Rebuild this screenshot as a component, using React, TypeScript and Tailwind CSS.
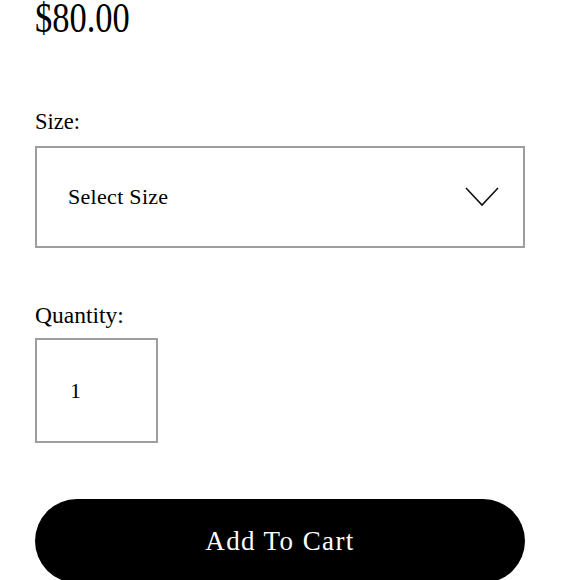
export default function App() {
  return (
    <div className="min-h-[580px] w-[580px] overflow-hidden bg-white text-black font-['Liberation_Serif',serif]">
      <div className="w-[490px] ml-[35px]">
        {/* Price */}
        <div className="mt-[-3px] h-[42px] text-[42px] leading-[42px]">
          <span className="inline-block origin-left scale-x-[0.82]">$80.00</span>
        </div>

        {/* Size */}
        <label className="block mt-[70px] text-[22.5px] leading-[26px]">Size:</label>
        <div className="mt-[11px] h-[102px] border-2 border-[#9e9e9e] flex items-center justify-between pl-[31px] pr-[24px]">
          <span className="text-[22px] tracking-[0.3px] pb-[1px]">Select Size</span>
          <svg width="34" height="20" viewBox="0 0 34 20" fill="none">
            <polyline points="1,1 17,18 33,1" stroke="#111" strokeWidth="1.6" />
          </svg>
        </div>

        {/* Quantity */}
        <label className="block mt-[54px] text-[23.5px] leading-[26px]">Quantity:</label>
        <div className="mt-[10px] w-[123px] h-[105px] border-2 border-[#9e9e9e] flex items-center pl-[33px]">
          <span className="text-[22px] pb-[1px]">1</span>
        </div>

        {/* Add to cart */}
        <button className="mt-[56px] w-[490px] h-[84px] rounded-full bg-black text-white text-[27px] tracking-[1.4px] flex items-center justify-center">
          Add To Cart
        </button>
      </div>
    </div>
  );
}
